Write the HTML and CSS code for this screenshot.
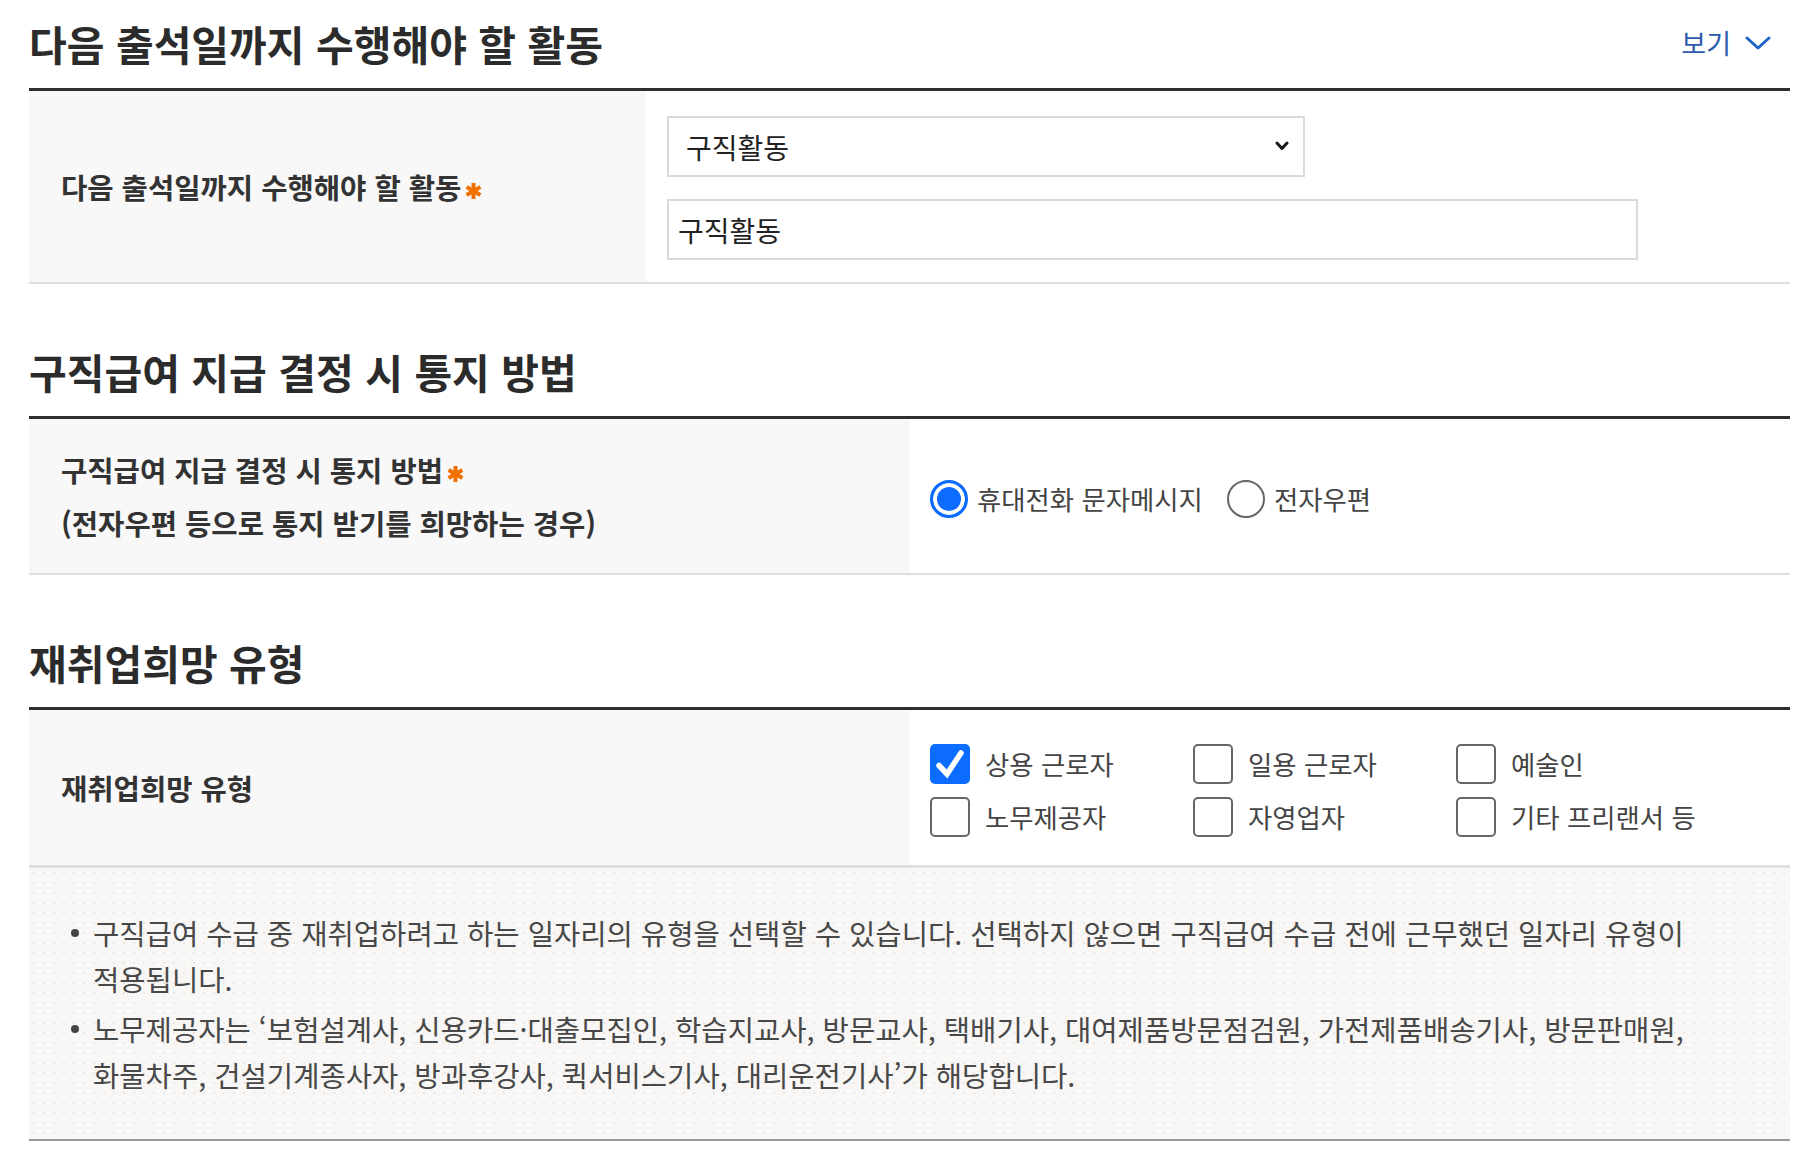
FILE: index.html
```html
<!DOCTYPE html>
<html lang="ko">
<head>
<meta charset="utf-8">
<title>재취업 활동</title>
<link rel="stylesheet" href="styles.css">
</head>
<body>
<div class="page">

  <section class="sec">
    <div class="sec-head">
      <h2 class="sec-title">다음 출석일까지 수행해야 할 활동</h2>
      <button class="toggle" type="button">보기
        <svg class="toggle-icon" width="26" height="16" viewBox="0 0 26 16"><polyline points="2,3 13,13 24,3" fill="none" stroke="#1d63c8" stroke-width="3" stroke-linecap="round" stroke-linejoin="round"/></svg>
      </button>
    </div>
    <div class="form-table">
      <div class="row">
        <div class="th th-narrow"><p>다음 출석일까지 수행해야 할 활동<svg class="req" width="19" height="18" viewBox="0 0 19 18"><g stroke="#f07000" stroke-width="4" stroke-linecap="butt"><line x1="9.5" y1="1" x2="9.5" y2="17"/><line x1="2.6" y1="5" x2="16.4" y2="13"/><line x1="2.6" y1="13" x2="16.4" y2="5"/></g></svg></p></div>
        <div class="td td-stack">
          <div class="select-wrap">
            <select class="select"><option>구직활동</option></select>
            <svg class="select-arrow" width="14" height="10" viewBox="0 0 14 10"><polyline points="2,2 7,7.5 12,2" fill="none" stroke="#1a1a1a" stroke-width="3" stroke-linecap="round" stroke-linejoin="round"/></svg>
          </div>
          <input class="text-input" type="text" value="구직활동">
        </div>
      </div>
    </div>
  </section>

  <section class="sec">
    <div class="sec-head">
      <h2 class="sec-title">구직급여 지급 결정 시 통지 방법</h2>
    </div>
    <div class="form-table">
      <div class="row">
        <div class="th th-wide th-two">
          <p>구직급여 지급 결정 시 통지 방법<svg class="req" width="19" height="18" viewBox="0 0 19 18"><g stroke="#f07000" stroke-width="4" stroke-linecap="butt"><line x1="9.5" y1="1" x2="9.5" y2="17"/><line x1="2.6" y1="5" x2="16.4" y2="13"/><line x1="2.6" y1="13" x2="16.4" y2="5"/></g></svg></p>
          <p>(전자우편 등으로 통지 받기를 희망하는 경우)</p>
        </div>
        <div class="td td-radio">
          <label class="radio"><input class="radio-input" type="radio" name="notice" checked><span class="opt-text">휴대전화 문자메시지</span></label>
          <label class="radio"><input class="radio-input" type="radio" name="notice"><span class="opt-text">전자우편</span></label>
        </div>
      </div>
    </div>
  </section>

  <section class="sec">
    <div class="sec-head">
      <h2 class="sec-title">재취업희망 유형</h2>
    </div>
    <div class="form-table">
      <div class="row row-last">
        <div class="th th-wide"><p>재취업희망 유형</p></div>
        <div class="td td-checks">
          <label class="check"><span class="check-box is-checked"><svg width="40" height="40" viewBox="0 0 40 40"><polyline points="9,21.5 17,30 31,9" fill="none" stroke="#fff" stroke-width="5.5" stroke-linecap="round" stroke-linejoin="miter"/></svg></span><span class="opt-text">상용 근로자</span></label>
          <label class="check"><span class="check-box"></span><span class="opt-text">일용 근로자</span></label>
          <label class="check"><span class="check-box"></span><span class="opt-text">예술인</span></label>
          <label class="check"><span class="check-box"></span><span class="opt-text">노무제공자</span></label>
          <label class="check"><span class="check-box"></span><span class="opt-text">자영업자</span></label>
          <label class="check"><span class="check-box"></span><span class="opt-text">기타 프리랜서 등</span></label>
        </div>
      </div>
      <div class="note">
        <ul class="note-list">
          <li class="note-item">구직급여 수급 중 재취업하려고 하는 일자리의 유형을 선택할 수 있습니다. 선택하지 않으면 구직급여 수급 전에 근무했던 일자리 유형이 적용됩니다.</li>
          <li class="note-item">노무제공자는 ‘보험설계사, 신용카드·대출모집인, 학습지교사, 방문교사, 택배기사, 대여제품방문점검원, 가전제품배송기사, 방문판매원, 화물차주, 건설기계종사자, 방과후강사, 퀵서비스기사, 대리운전기사’가 해당합니다.</li>
        </ul>
      </div>
    </div>
  </section>

</div>
</body>
</html>
```

FILE: styles.css
```css
* {
  box-sizing: border-box;
  margin: 0;
  padding: 0;
}

body {
  background: #fff;
  font-family: "Noto Sans CJK KR", "Noto Sans", sans-serif;
  color: #333;
}

.page {
  padding: 17px 28px 36px 29px;
}

.sec + .sec {
  margin-top: 61px;
}

.sec-head {
  display: flex;
  align-items: center;
  justify-content: space-between;
  padding-bottom: 19px;
}

.sec-title {
  font-size: 41px;
  line-height: 52px;
  font-weight: 700;
  color: #2b2b2b;
}

.toggle {
  display: flex;
  align-items: center;
  gap: 14px;
  margin-right: 19px;
  background: none;
  border: 0;
  font-family: inherit;
  font-size: 27px;
  line-height: 52px;
  color: #2c5bad;
}

.form-table {
  border-top: 3px solid #2e2e2e;
}

.row {
  display: flex;
  border-bottom: 2px solid #dedede;
}

.th {
  display: flex;
  flex-direction: column;
  justify-content: center;
  flex: none;
  padding-left: 32px;
  background: #f8f8f8;
  font-size: 28.6px;
  font-weight: 700;
  color: #333;
  line-height: 53px;
}

.th-narrow {
  width: 617px;
}

.th-wide {
  width: 881px;
}

.req {
  margin-left: 3px;
  vertical-align: -1px;
}

.td {
  flex: 1;
}

.td-stack {
  display: flex;
  flex-direction: column;
  align-items: flex-start;
  gap: 22px;
  padding: 25px 0 22px 21px;
}

.select-wrap {
  position: relative;
  width: 638px;
}

.select {
  appearance: none;
  -webkit-appearance: none;
  display: block;
  width: 100%;
  height: 61px;
  padding: 0 40px 0 17px;
  border: 2px solid #dadada;
  border-radius: 0;
  background: #fff;
  font-family: inherit;
  font-size: 28px;
  color: #222;
}

.select-arrow {
  position: absolute;
  right: 16px;
  top: 25px;
}

.text-input {
  display: block;
  width: 971px;
  height: 61px;
  padding: 0 9px;
  border: 2px solid #dadada;
  border-radius: 0;
  background: #fff;
  font-family: inherit;
  font-size: 28px;
  color: #222;
  outline: none;
}

.th-two {
  padding-top: 24px;
  padding-bottom: 24px;
}

.td-radio {
  display: flex;
  align-items: center;
  gap: 24px;
  padding: 6px 0 0 20px;
}

.radio {
  display: flex;
  align-items: center;
  gap: 9px;
}

.radio-input {
  appearance: none;
  -webkit-appearance: none;
  width: 38px;
  height: 38px;
  margin: 0;
  border: 2px solid #666;
  border-radius: 50%;
  background: #fff;
}

.radio-input:checked {
  border: 3px solid #0b6cff;
  background: #0b6cff;
  box-shadow: inset 0 0 0 4px #fff;
}

.opt-text {
  font-size: 26.4px;
  color: #444;
  line-height: 40px;
}

.td-checks {
  display: grid;
  grid-template-columns: repeat(3, 263px);
  row-gap: 13px;
  align-content: start;
  padding: 34px 0 28px 20px;
}

.check {
  display: flex;
  align-items: center;
  gap: 15px;
}

.check-box {
  display: block;
  width: 40px;
  height: 40px;
  flex: none;
  border: 2px solid #666;
  border-radius: 5px;
  background: #fff;
}

.check-box.is-checked {
  border: 0;
  background: #0b6cff;
}

.check-box svg {
  display: block;
}

.note {
  border-top: 1px solid #e4e4e4;
  border-bottom: 2px solid #9a9a9a;
  padding: 42px 40px 41px 42px;
  background-color: #f8f7f5;
  background-image: radial-gradient(circle, #e9e7e3 1px, transparent 1.4px);
  background-size: 10px 10px;
}

.note-list {
  list-style: none;
}

.note-item {
  display: flex;
  font-size: 28.6px;
  line-height: 46px;
  color: #484848;
  word-break: keep-all;
}

.note-item + .note-item {
  margin-top: 4px;
}

.note-item::before {
  content: "";
  flex: none;
  width: 8px;
  height: 8px;
  margin: 19px 14px 0 0;
  border-radius: 50%;
  background: #444;
}
```
